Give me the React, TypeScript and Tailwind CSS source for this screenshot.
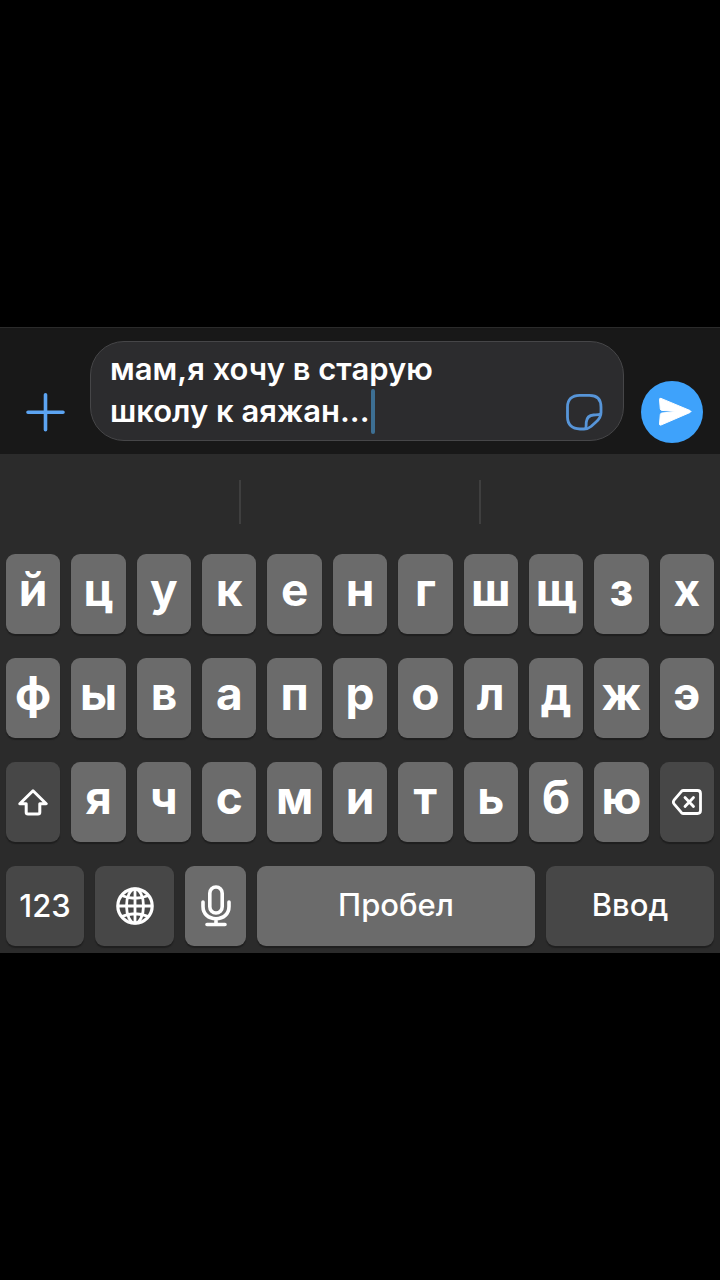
import { useState } from "react";
import type { ReactNode } from "react";

const ROWS = ["йцукенгшщзх", "фывапролджэ", "ячсмитьбю"];

const FONT = "font-['Inter','Noto_Sans',sans-serif]";

interface KeyProps {
  label?: string;
  dark?: boolean;
  className?: string;
  onClick?: () => void;
  children: ReactNode;
}

function Key({ label, dark, className = "flex-1", onClick, children }: KeyProps) {
  return (
    <button
      type="button"
      aria-label={label}
      onClick={onClick}
      className={`flex h-20 min-w-0 items-center justify-center rounded-[9px] text-white shadow-[0_2px_1px_#1f1f1f] ${
        dark ? "bg-[#474747]" : "bg-[#6b6b6b]"
      } ${className}`}
    >
      {children}
    </button>
  );
}

function Letters({ row, onType }: { row: string; onType: (s: string) => void }) {
  return (
    <>
      {row.split("").map((ch) => (
        <Key key={ch} onClick={() => onType(ch)}>
          <span className="pb-[10px] text-[46px] leading-[56px] font-bold">{ch}</span>
        </Key>
      ))}
    </>
  );
}

function PlusIcon() {
  return (
    <svg viewBox="0 0 39 39" className="w-full" fill="none" stroke="#5ca4f2" strokeWidth="3.6" strokeLinecap="round">
      <path d="M19.5 1.8v35M2 19.3h35" />
    </svg>
  );
}

function StickerIcon() {
  return (
    <svg viewBox="0 0 38 38" className="w-full" fill="none" stroke="#5795d8" strokeWidth="2.8" strokeLinejoin="round">
      <path d="M19 36H15C7 36 2.5 31.5 2.5 24V14C2.500 6.500 7 2.300 14.500 2.300H24.500C32 2.300 36 6.500 36 14V19.500C36 24 34.500 26 31 29L26 33.500C23.500 35.500 22 36 19 36Z" />
      <path d="M20.500 35.800C21.500 34 21 31.500 21.300 29C21.800 24.500 24.500 22.300 28.500 22C31 21.800 33.500 22.300 35.700 21" />
    </svg>
  );
}

function SendIcon() {
  return (
    <svg viewBox="0 0 62 62" className="w-full" fill="#fff" stroke="#fff" strokeWidth="1" strokeLinejoin="round">
      <path d="M18.500 18.300Q18.500 16.900 20 17.400L49 29.500Q51 30.500 49 31.500L20 44Q18.500 44.500 18.500 43L19.300 33.500Q19.500 32.200 21 32L36 30.500L21 29.400Q19.500 29.200 19.300 28Z" />
    </svg>
  );
}

function ShiftIcon() {
  return (
    <svg viewBox="0 0 30 27" className="w-[30px]" fill="none" stroke="#fff" strokeWidth="3" strokeLinejoin="round">
      <path d="M15 1.800L28.200 14.800H21.800V23.200Q21.800 24.900 20 24.900H10Q8.200 24.900 8.200 23.200V14.800H1.800Z" />
    </svg>
  );
}

function DeleteIcon() {
  return (
    <svg viewBox="0 0 30 26" className="w-[30px]" fill="none" stroke="#fff" strokeWidth="2.800" strokeLinecap="round" strokeLinejoin="round">
      <path d="M11.500 1.500H25.500Q28.500 1.500 28.500 4.500V21.500Q28.500 24.500 25.500 24.500H11.500Q10.300 24.500 9.500 23.700L2 14.800Q.7 13 2 11.200L9.500 2.300Q10.300 1.500 11.500 1.500Z" />
      <path d="M13 8.500l8.500 9M21.500 8.500l-8.500 9" />
    </svg>
  );
}

function GlobeIcon() {
  return (
    <svg viewBox="0 0 38 38" className="w-[38px]" fill="none" stroke="#fff" strokeWidth="2.800">
      <circle cx="19" cy="19" r="17.200" strokeWidth="3.200" />
      <ellipse cx="19" cy="19" rx="8.500" ry="17" />
      <path d="M19 1.700v34.600M1.700 19h34.600M5.500 8.500Q19 14 32.500 8.500M5.500 29.500Q19 24 32.500 29.500" />
    </svg>
  );
}

function MicIcon() {
  return (
    <svg viewBox="0 0 30 42" className="w-[30px]" fill="none" stroke="#fff" strokeWidth="3.600" strokeLinecap="round">
      <rect x="8.800" y="2" width="12.400" height="26" rx="6.200" />
      <path d="M2 17v4.500C2 29 7.500 33.700 15 33.700S28 29 28 21.500V17M15 33.700V39.500M6 39.500h18" />
    </svg>
  );
}

export default function App() {
  const [text, setText] = useState("мам,я хочу в старую\nшколу к аяжан...");

  const type = (s: string) => setText((prev) => prev + s);

  return (
    <main className={`flex min-h-screen flex-col justify-center bg-black ${FONT}`}>
      {/* message bar */}
      <div className="flex items-end border-t border-[#2b2b2b] bg-[#181818] pt-[13px] pr-[17px] pb-[11px] pl-[26px]">
        <button type="button" aria-label="Прикрепить" className="flex h-[62px] w-[39px] shrink-0 items-center">
          <PlusIcon />
        </button>
        <div className="relative mr-[17px] mb-0.5 ml-[25px] flex min-w-0 flex-1 items-end rounded-[34px] border border-[#464648] bg-[#2c2c2e] pr-5 pl-[19px]">
          <textarea
            aria-label="Сообщение"
            rows={2}
            value={text}
            onChange={(e) => setText(e.target.value)}
            className="mt-[6px] mb-2 h-[84px] min-w-0 flex-1 resize-none overflow-hidden bg-transparent text-[31px] leading-[42px] font-semibold text-white caret-transparent outline-none"
          />
          <span className="absolute bottom-[6px] left-[280px] h-[45px] w-1 rounded-full bg-[#3d6f93]" />
          <button type="button" aria-label="Стикеры" className="mb-[9px] w-[38px] shrink-0">
            <StickerIcon />
          </button>
        </div>
        <button type="button" aria-label="Отправить" className="size-[62px] shrink-0 rounded-full bg-[#3ea2fb]">
          <SendIcon />
        </button>
      </div>

      {/* keyboard */}
      <div className="bg-[#2b2b2b] px-1.5 pb-[7px]">
        <div className="-mx-1.5 flex h-[100px] pt-[26px]">
          <div className="h-11 flex-1 border-r-2 border-[#3f3f3f]" />
          <div className="h-11 flex-1 border-r-2 border-[#3f3f3f]" />
          <div className="h-11 flex-1" />
        </div>
        <div className="flex flex-col gap-6">
          <div className="flex gap-[11px]">
            <Letters row={ROWS[0]} onType={type} />
          </div>
          <div className="flex gap-[11px]">
            <Letters row={ROWS[1]} onType={type} />
          </div>
          <div className="flex gap-[11px]">
            <Key dark label="Shift">
              <ShiftIcon />
            </Key>
            <Letters row={ROWS[2]} onType={type} />
            <Key dark label="Удалить" onClick={() => setText((prev) => prev.slice(0, -1))}>
              <DeleteIcon />
            </Key>
          </div>
          <div className="flex gap-[11px] text-[31px] leading-10 font-medium">
            <Key dark className="w-[78px]">
              123
            </Key>
            <Key dark label="Язык" className="w-[79px]">
              <GlobeIcon />
            </Key>
            <Key label="Диктовка" className="w-[61px]">
              <MicIcon />
            </Key>
            <Key className="flex-1 pb-0.5" onClick={() => type(" ")}>
              Пробел
            </Key>
            <Key dark className="w-[168px] pb-0.5" onClick={() => type("\n")}>
              Ввод
            </Key>
          </div>
        </div>
      </div>
    </main>
  );
}
